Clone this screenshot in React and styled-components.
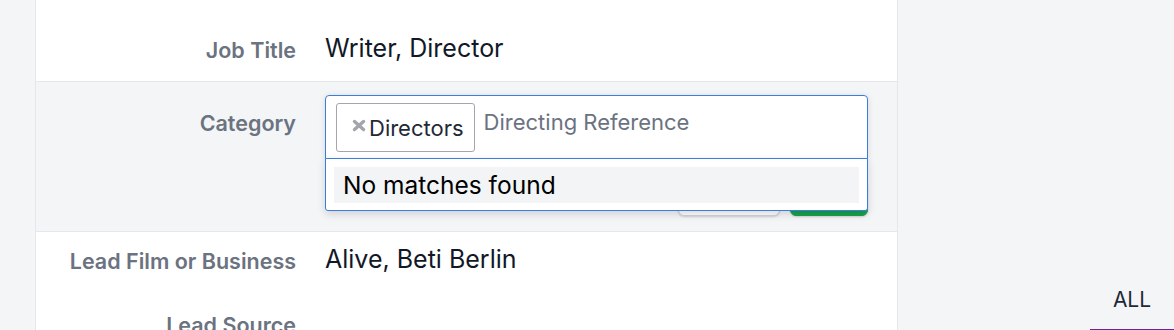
import React from 'react';
import styled, { createGlobalStyle } from 'styled-components';

const Global = createGlobalStyle`
  html, body {
    margin: 0;
    padding: 0;
    background: #f4f5f7;
    font-family: Inter, 'Noto Sans', sans-serif;
  }
`;

const Page = styled.div`
  display: flex;
  height: 330px;
  overflow: hidden;
  background: #f4f5f7;
`;

const Sidebar = styled.div`
  width: 35px;
  flex: none;
  border-right: 1px solid #e5e7eb;
`;

const Main = styled.div`
  width: 861px;
  flex: none;
  background: #fff;
  border-right: 1px solid #e5e7eb;
`;

const Row = styled.div`
  display: grid;
  grid-template-columns: 260px 1fr;
  column-gap: 29px;
  align-items: start;
  padding: ${p => p.$pad || '12px 0 22px'};
  background: ${p => (p.$editing ? '#f4f5f7' : '#fff')};
  border-bottom: ${p => (p.$border ? '1px solid #e5e7eb' : 'none')};
`;

const Label = styled.div`
  text-align: right;
  font-size: 21.5px;
  line-height: 26px;
  font-weight: 600;
  color: #6b7280;
  white-space: nowrap;
  padding-top: ${p => p.$top || '4px'};
`;

const Value = styled.div`
  font-size: 25px;
  line-height: 30px;
  color: #111827;
`;

const Editor = styled.div`
  width: 543px;
`;

const Combo = styled.div`
  position: relative;
  box-shadow: 0 1px 6px rgba(0, 0, 0, 0.12);
  border-radius: 4px 4px 0 0;
`;

const Field = styled.div`
  display: flex;
  align-items: flex-start;
  gap: 9px;
  height: 64px;
  box-sizing: border-box;
  padding: 7px 10px;
  background: #fff;
  border: 1px solid #3b7ddd;
  border-radius: 4px 4px 0 0;
`;

const Tag = styled.div`
  display: flex;
  align-items: center;
  height: 49px;
  box-sizing: border-box;
  padding: 0 10px 0 15px;
  border: 1px solid #a3a7ad;
  border-radius: 3px;
  font-size: 22px;
  color: #1f2937;
`;

const Remove = styled.svg`
  width: 14px;
  height: 13px;
  margin: -5px 3px 0 0;
  flex: none;
`;

const Placeholder = styled.span`
  font-size: 22px;
  line-height: 38px;
  color: #6b7280;
`;

const Dropdown = styled.div`
  position: absolute;
  top: 100%;
  left: 0;
  right: 0;
  z-index: 2;
  margin-top: -1px;
  padding: 8px 8px 7px;
  background: #fff;
  border: 1px solid #3b7ddd;
  border-radius: 0 0 3px 3px;
  box-shadow: 0 3px 8px rgba(0, 0, 0, 0.15);
`;

const NoMatch = styled.div`
  height: 36px;
  line-height: 36px;
  padding-left: 9px;
  background: #f3f4f6;
  font-size: 24.5px;
  color: #000;
`;

const Actions = styled.div`
  display: flex;
  justify-content: flex-end;
  gap: 10px;
  margin-top: 21px;
`;

const Button = styled.button`
  width: ${p => p.$w}px;
  height: 36px;
  border-radius: 6px;
  font-family: inherit;
  font-size: 16px;
  border: 1px solid ${p => (p.$primary ? '#16a34a' : '#d1d5db')};
  background: ${p => (p.$primary ? '#16a34a' : '#fff')};
  color: ${p => (p.$primary ? '#fff' : '#374151')};
  box-shadow: 0 1px 2px rgba(0, 0, 0, 0.15);
`;

const Aside = styled.div`
  flex: 1;
  display: flex;
  flex-direction: column;
  justify-content: flex-end;
  align-items: flex-end;
`;

const Tab = styled.div`
  width: 84px;
  text-align: center;
  font-size: 21px;
  line-height: 26px;
  padding: 0 0 16px;
  color: #1f2937;
  border-bottom: 2px solid #6b21a8;
  margin-bottom: -1px;
`;

export default function App() {
  return (
    <Page>
      <Global />
      <Sidebar />
      <Main>
        <Row $border $pad="33px 0 18px">
          <Label>Job Title</Label>
          <Value>Writer, Director</Value>
        </Row>
        <Row $border $editing $pad="13px 0 15px">
          <Label $top="15px">Category</Label>
          <Editor>
            <Combo>
              <Field>
                <Tag>
                  <Remove viewBox="0 0 14 13">
                    <path d="M2.5 2.5 L11.5 10.5 M11.5 2.5 L2.5 10.5" stroke="#a2a6ab" strokeWidth="3.4" strokeLinecap="round" />
                  </Remove>
                  Directors
                </Tag>
                <Placeholder>Directing Reference</Placeholder>
              </Field>
              <Dropdown>
                <NoMatch>No matches found</NoMatch>
              </Dropdown>
            </Combo>
            <Actions>
              <Button $w={102}>Cancel</Button>
              <Button $w={78} $primary>Save</Button>
            </Actions>
          </Editor>
        </Row>
        <Row>
          <Label>Lead Film or Business</Label>
          <Value>Alive, Beti Berlin</Value>
        </Row>
        <Row>
          <Label>Lead Source</Label>
          <Value />
        </Row>
      </Main>
      <Aside>
        <Tab>ALL</Tab>
      </Aside>
    </Page>
  );
}
